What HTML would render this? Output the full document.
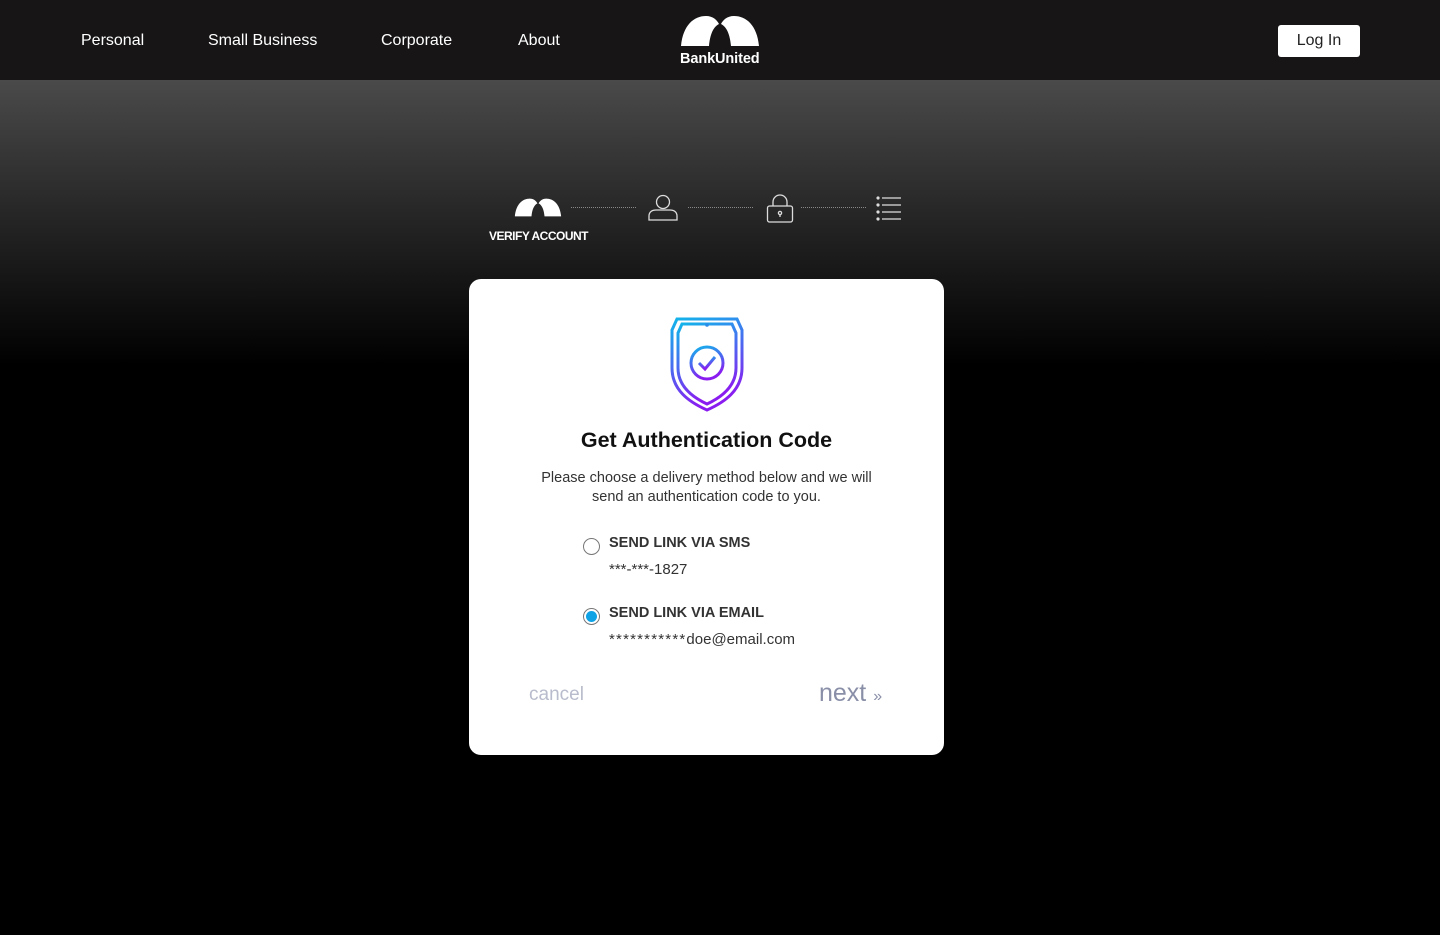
<!DOCTYPE html>
<html><head><meta charset="utf-8"><style>
*{margin:0;padding:0;box-sizing:border-box}
body{width:1440px;height:935px;overflow:hidden;background:#000;font-family:"Liberation Sans",sans-serif;position:relative}
.hdr{position:absolute;left:0;top:0;width:1440px;height:80px;background:#171516}
.hdr a{position:absolute;top:32px;color:#fff;font-size:16px;text-decoration:none}
.grad{position:absolute;left:0;top:80px;width:1440px;height:300px;background:linear-gradient(#4a4a4a,#262626 45%,#000 95%)}
.login{position:absolute;left:1278px;top:25px;width:82px;height:32px;background:#fff;border-radius:3px;color:#222;font-size:16px;text-align:center;line-height:32px}
.card{position:absolute;left:469px;top:279px;width:475px;height:476px;background:#fff;border-radius:12px}
.t{position:absolute;width:100%;text-align:center}
.dots{position:absolute;top:207px;height:0;border-top:1px dotted #888}
.lab{position:absolute;left:140px;font-size:14.5px;color:#333;font-weight:bold}
.val{position:absolute;left:140px;font-size:14.5px;color:#333}
</style></head><body>
<div class="hdr">
<a style="left:81px">Personal</a><a style="left:208px">Small Business</a><a style="left:381px">Corporate</a><a style="left:518px">About</a>
<svg style="position:absolute;left:680px;top:15px" width="80" height="32" viewBox="0 0 80 32"><path d="M1 31 C3 10 14 1 26 1 C33 1 37 5 39 9 C33 12 30 20 29 31 Z M79 31 C77 10 66 1 54 1 C47 1 43 5 41 9 C47 12 50 20 51 31 Z" fill="#fff"/></svg>
<div style="position:absolute;left:680px;top:51px;color:#fff;font-weight:bold;font-size:14.5px;letter-spacing:-0.1px">BankUnited</div>
<div class="login">Log In</div>
</div>
<div class="grad"></div>
<svg style="position:absolute;left:514px;top:198px" width="48" height="19" viewBox="0 0 80 32"><path d="M1 31 C3 10 14 1 26 1 C33 1 37 5 39 9 C33 12 30 20 29 31 Z M79 31 C77 10 66 1 54 1 C47 1 43 5 41 9 C47 12 50 20 51 31 Z" fill="#fff"/></svg>
<div style="position:absolute;left:489px;top:229px;color:#fff;font-size:12px;font-weight:bold;letter-spacing:-0.5px">VERIFY ACCOUNT</div>
<div class="dots" style="left:571px;width:65px"></div>
<div class="dots" style="left:688px;width:65px"></div>
<div class="dots" style="left:801px;width:65px"></div>
<svg style="position:absolute;left:647px;top:194px" width="32" height="28" viewBox="0 0 32 28" fill="none" stroke="#ddd" stroke-width="1.3"><circle cx="16" cy="8" r="6.5"/><path d="M2 26 V22 C2 18 5 16 9 16 H23 C27 16 30 18 30 22 V26 Z"/></svg>
<svg style="position:absolute;left:766px;top:194px" width="28" height="30" viewBox="0 0 28 30" fill="none" stroke="#ddd" stroke-width="1.3"><path d="M7 12 V8 a7 7 0 0 1 14 0 V12"/><rect x="1.5" y="12" width="25" height="16" rx="2"/><circle cx="14" cy="19" r="1.6"/><path d="M14 20.5 V23"/></svg>
<svg style="position:absolute;left:876px;top:196px" width="26" height="26" viewBox="0 0 26 26" stroke="#ddd" stroke-width="1.2"><g fill="#ddd"><circle cx="2" cy="2" r="1"/><circle cx="2" cy="9" r="1"/><circle cx="2" cy="16" r="1"/><circle cx="2" cy="23" r="1"/></g><path d="M6 2H25M6 9H25M6 16H25M6 23H25"/></svg>
<div class="card">
<svg style="position:absolute;left:200px;top:37px" width="76" height="96" viewBox="0 0 76 96" fill="none" stroke-width="3">
<defs><linearGradient id="g" x1="0" y1="0" x2="0.3" y2="1"><stop offset="0" stop-color="#12b5ea"/><stop offset="0.5" stop-color="#4a6af0"/><stop offset="1" stop-color="#8a1cf0"/></linearGradient></defs>
<g stroke="url(#g)">
<path d="M3 14 L8 3 H68 L73 14 V52 C73 74 56 86 38 94 C20 86 3 74 3 52 Z"/>
<path d="M9 17 L13 8 H63 L67 17 V52 C67 70 53 81 38 88 C23 81 9 70 9 52 Z"/>
<circle cx="38" cy="47" r="16"/><path d="M30 47 L36 53 L46 41"/>
</g><circle cx="38" cy="9" r="1.8" fill="#2a8be8"/></svg>
<div class="t" style="top:149px;font-size:21.5px;color:#111;font-weight:bold">Get Authentication Code</div>
<div class="t" style="top:190px;font-size:14.5px;color:#333;line-height:19px">Please choose a delivery method below and we will<br>send an authentication code to you.</div>
<div style="position:absolute;left:114px;top:259px;width:17px;height:17px;border:1px solid #777;border-radius:50%"></div>
<div class="lab" style="top:256px">SEND LINK VIA SMS</div>
<div class="val" style="top:282px;font-size:15px">***-***-1827</div>
<div style="position:absolute;left:114px;top:329px;width:17px;height:17px;border:1px solid #777;border-radius:50%;padding:2px"><div style="width:11px;height:11px;border-radius:50%;background:#0fa3e6"></div></div>
<div class="lab" style="top:326px">SEND LINK VIA EMAIL</div>
<div class="val" style="top:352px;font-size:15px"><span style="letter-spacing:1.2px">***********</span>doe@email.com</div>
<div style="position:absolute;left:60px;top:405px;font-size:19px;color:#b8bccc">cancel</div>
<div style="position:absolute;left:350px;top:400px;font-size:25px;color:#8a8fa8">next <span style="font-size:16px">»</span></div>
</div>
</body></html>
